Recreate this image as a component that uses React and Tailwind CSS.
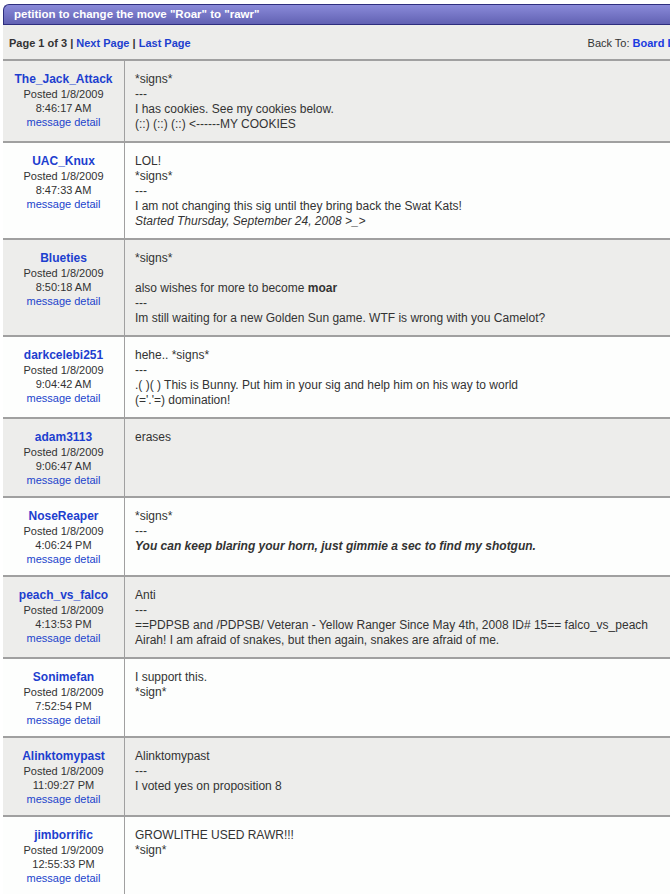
import React from 'react';

// ─── Thread data ──────────────────────────────────────────────────────────────
const posts = [
  {
    user: 'The_Jack_Attack',
    date: '1/8/2009',
    time: '8:46:17 AM',
    lines: ['*signs*', '---', 'I has cookies. See my cookies below.', '(::) (::) (::) <------MY COOKIES'],
  },
  {
    user: 'UAC_Knux',
    date: '1/8/2009',
    time: '8:47:33 AM',
    lines: [
      'LOL!',
      '*signs*',
      '---',
      'I am not changing this sig until they bring back the Swat Kats!',
      <i>Started Thursday, September 24, 2008 &gt;_&gt;</i>,
    ],
  },
  {
    user: 'Blueties',
    date: '1/8/2009',
    time: '8:50:18 AM',
    lines: [
      '*signs*',
      '',
      <>also wishes for more to become <b>moar</b></>,
      '---',
      'Im still waiting for a new Golden Sun game. WTF is wrong with you Camelot?',
    ],
  },
  {
    user: 'darkcelebi251',
    date: '1/8/2009',
    time: '9:04:42 AM',
    lines: [
      'hehe.. *signs*',
      '---',
      '.( )( ) This is Bunny. Put him in your sig and help him on his way to world',
      "(='.'=) domination!",
    ],
  },
  {
    user: 'adam3113',
    date: '1/8/2009',
    time: '9:06:47 AM',
    lines: ['erases'],
  },
  {
    user: 'NoseReaper',
    date: '1/8/2009',
    time: '4:06:24 PM',
    lines: [
      '*signs*',
      '---',
      <b><i>You can keep blaring your horn, just gimmie a sec to find my shotgun.</i></b>,
    ],
  },
  {
    user: 'peach_vs_falco',
    date: '1/8/2009',
    time: '4:13:53 PM',
    lines: [
      'Anti',
      '---',
      '==PDPSB and /PDPSB/ Veteran - Yellow Ranger Since May 4th, 2008 ID# 15== falco_vs_peach',
      'Airah! I am afraid of snakes, but then again, snakes are afraid of me.',
    ],
  },
  {
    user: 'Sonimefan',
    date: '1/8/2009',
    time: '7:52:54 PM',
    lines: ['I support this.', '*sign*'],
  },
  {
    user: 'Alinktomypast',
    date: '1/8/2009',
    time: '11:09:27 PM',
    lines: ['Alinktomypast', '---', 'I voted yes on proposition 8'],
  },
  {
    user: 'jimborrific',
    date: '1/9/2009',
    time: '12:55:33 PM',
    lines: ['GROWLITHE USED RAWR!!!', '*sign*'],
  },
];

// ─── One message row ──────────────────────────────────────────────────────────
function PostRow({ post, index }) {
  const bg = index % 2 === 0 ? 'bg-[#ededeb]' : 'bg-[#fdfefd]';
  return (
    <div className={`flex border-b-2 border-[#a0a0a0] ${bg}`}>
      <div className="w-[122px] shrink-0 border-r border-[#a0a0a0] pt-[11px] pb-[9px] text-center">
        <div className="text-[12px] leading-[15px] font-bold text-[#1d3fcf]">{post.user}</div>
        <div className="text-[11px] leading-[14px] text-[#333]">Posted {post.date}</div>
        <div className="text-[11px] leading-[14px] text-[#333]">{post.time}</div>
        <div className="text-[11px] leading-[14px] text-[#2244cc]">message detail</div>
      </div>
      <div className="flex-1 pl-[10px] pt-[11px] pb-[9px] text-[12px] leading-[15px] text-[#333]">
        {post.lines.map((line, i) => (
          <div key={i} className="whitespace-pre min-h-[15px]">{line}</div>
        ))}
      </div>
    </div>
  );
}

export default function App() {
  return (
    <div className="w-full min-h-screen overflow-hidden bg-white" style={{ fontFamily: '"Liberation Sans", Arial, sans-serif' }}>
      <div className="ml-[3px] w-[690px] pt-[4px]">
        {/* Title bar */}
        <div className="h-[21px] flex items-center pl-[10px] rounded-tl-[6px] border border-r-0 border-[#2e2e7e] bg-gradient-to-b from-[#8a8ad9] to-[#6262b3]">
          <span className="text-[11.5px] font-bold text-white leading-none">
            petition to change the move "Roar" to "rawr"
          </span>
        </div>

        {/* Page nav */}
        <div className="h-[36px] flex items-center justify-between px-[6px] pt-[2px] bg-[#ededeb] border-b-2 border-[#a0a0a0] text-[11px]">
          <div className="font-bold text-[#333]">
            Page 1 of 3 | <span className="text-[#1d3fcf]">Next Page</span> | <span className="text-[#1d3fcf]">Last Page</span>
          </div>
          <div className="text-[#333]">
            Back To: <span className="font-bold text-[#1a3ae0]">Board List</span>
          </div>
        </div>

        {/* Messages */}
        {posts.map((post, i) => (
          <PostRow key={post.user} post={post} index={i} />
        ))}
      </div>
    </div>
  );
}
